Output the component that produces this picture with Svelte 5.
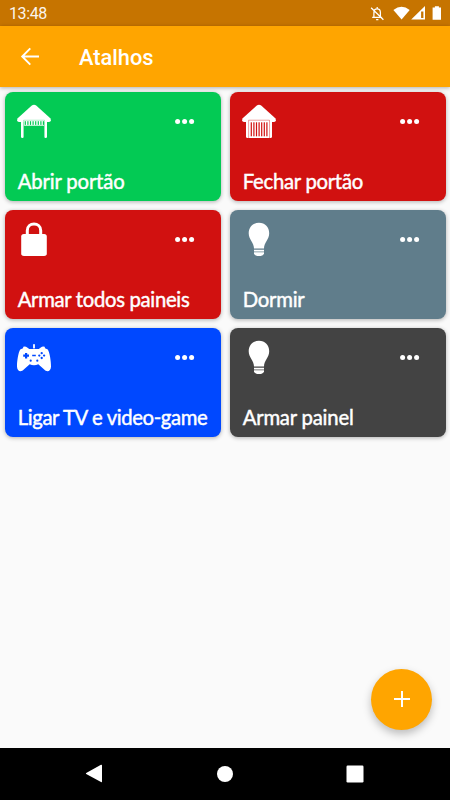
<script>
  const shortcuts = [
    { label: 'Abrir portão', icon: 'open', color: '#03ca54', width: 107 },
    { label: 'Fechar portão', icon: 'closed', color: '#d11110', width: 120.5 },
    { label: 'Armar todos paineis', icon: 'lock', color: '#d11110', width: 172 },
    { label: 'Dormir', icon: 'bulb', color: '#607d8b', width: 62 },
    { label: 'Ligar TV e video-game', icon: 'game', color: '#0048ff', width: 190 },
    { label: 'Armar painel', icon: 'bulb', color: '#434343', width: 111 }
  ];
  const slats = [7.7, 10.3, 12.9, 15.5, 18.1, 20.7, 23.3, 25.8];
</script>

<div class="screen">
  <div class="status">
    <span class="time">13:48</span>
    <svg width="80" height="18" viewBox="0 0 80 18" fill="#fff">
      <g fill="none" stroke="#fff" stroke-width="1.25">
        <path d="M3.9 13.2V8.5C3.9 3.5 10.4 3.5 10.4 8.5V13.2M2.2 13.3H12.2M7.2 4.6V3M6.1 15.5H8.4M1.1 3.7L13.4 15.7" />
      </g>
      <path d="M23.4 6Q31.6-.4 39.7 6L31.6 15.6Z" />
      <path fill-rule="evenodd" d="M55 2V15.6H41.2ZM53.4 7.6H51.1V14H53.4Z" />
      <path d="M62.6 3.5H64.9V2.2H68.9V3.5H71V15.8H62.6Z" />
    </svg>
  </div>
  <header>
    <svg class="back" width="20" height="20" viewBox="0 0 20 20" fill="none" stroke="#fff" stroke-width="1.9">
      <path d="M19 9.5H2.5M10.3 1.4L2.2 9.5L10.3 17.6" />
    </svg>
    <h1>Atalhos</h1>
  </header>
  <main>
    {#each shortcuts as s}
      <section class="card" style="background: {s.color}">
        <div class="top">
          <svg width="34" height="34" viewBox="0 0 34 34" fill="#fff">
            {#if s.icon === 'open' || s.icon === 'closed'}
              <path d="M14.8 1.5Q17-.2 19.2 1.5L33.3 14.2Q34.8 17.5 32 18H2Q-.8 17.5.7 14.2Z" />
              {#if s.icon === 'open'}
                <path d="M4 17H6.8V33Q6.8 34 5.4 34Q4 34 4 33ZM27.2 17H30V33Q30 34 28.6 34Q27.2 34 27.2 33Z" />
                <path d="M6.8 16.6H27.2V21.7H6.8Z" />
                <path d="M6.6 34V16.2H27.5V34" fill="none" stroke={s.color} stroke-width=".6" opacity=".5" />
                {#each slats as x}
                  <rect {x} y="17.2" width="1.2" height="3.7" fill={s.color} />
                {/each}
              {:else}
                <path d="M4 17H30V32.5Q30 34 28.5 34H5.5Q4 34 4 32.5Z" />
                <path d="M6.6 34V16.2H27.5V34" fill="none" stroke={s.color} stroke-width=".8" opacity=".5" />
                {#each slats.slice(0, 7) as x}
                  <rect x={x + 1} y="18.3" width="1.2" height="14" fill={s.color} />
                {/each}
              {/if}
            {:else if s.icon === 'lock'}
              <rect x="4.2" y="12" width="25.6" height="22" rx="2.6" />
              <path d="M10.3 13V8.6C10.3-.2 23.7-.2 23.7 8.6V13" fill="none" stroke="#fff" stroke-width="3" />
            {:else if s.icon === 'bulb'}
              <path d="M17 .8C10.9.8 6.7 5 6.7 11.2C6.7 17.5 12 20.5 12 26.6H22C22 20.5 27.2 17.5 27.2 11.2C27.2 5 23.1.8 17 .8Z" />
              <path d="M12 27.7H22V31.2Q21.5 34 17 34Q12.5 34 12 31.2Z" />
              <path d="M12 29.8H22" stroke={s.color} stroke-width="1.4" opacity=".5" />
            {:else}
              <rect x="16.1" y="4.2" width="1.8" height="4.2" />
              <path d="M3.2 9.5L6 8.2L6.3 6.8Q8.3 5.8 10.2 7.5L12.2 9H21.8L23.8 7.5Q25.7 5.8 27.7 6.8L28 8.2L30.8 9.5C32.8 13 34 21 34 26.5C34 31.5 29.8 32.5 27.2 29.5L21.3 24.3Q17 26.2 12.7 24.3L6.8 29.5C4.2 32.5 0 31.5 0 26.5C0 21 1.2 13 3.2 9.5Z" />
              <g fill={s.color}>
                <path d="M8 13H10.2V14.6H12V16.8H10.2V18.5H8V16.8H6.2V14.6H8ZM15.2 14.7H18.8V16.2H15.2Z" />
                <circle cx="24.7" cy="13.2" r="1.15" /><circle cx="24.7" cy="18" r="1.15" />
                <circle cx="22.3" cy="15.6" r="1.15" /><circle cx="27.1" cy="15.6" r="1.15" />
                <circle cx="13.7" cy="20.7" r="1.1" /><circle cx="20.3" cy="20.7" r="1.1" />
              </g>
            {/if}
          </svg>
          <svg class="more" width="20" height="6" viewBox="0 0 20 6" fill="#fff">
            <circle cx="2.6" cy="2.6" r="2.5" /><circle cx="9.6" cy="2.6" r="2.5" /><circle cx="16.6" cy="2.6" r="2.5" />
          </svg>
        </div>
        <svg class="label" width="200" height="32" viewBox="0 0 200 32">
          <text x="0.7" y="24" textLength={s.width}>{s.label}</text>
        </svg>
      </section>
    {/each}
  </main>
  <button class="fab" aria-label="Adicionar">
    <svg width="18" height="18" viewBox="0 0 18 18" fill="none" stroke="#fff" stroke-width="2">
      <path d="M9 1V17M1 9H17" />
    </svg>
  </button>
  <nav>
    <svg width="18" height="20" viewBox="0 0 18 20" fill="#fff"><path d="M1.2 9L16 .8Q17 .5 17 1.5V17.5Q17 18.7 16 18.1L1.2 10.1Q.5 9.5 1.2 9Z" /></svg>
    <svg width="18" height="18" viewBox="0 0 18 18" fill="#fff"><circle cx="9" cy="9" r="8" /></svg>
    <svg width="18" height="18" viewBox="0 0 18 18" fill="#fff"><rect x=".5" y=".5" width="17" height="17" rx="1.2" /></svg>
  </nav>
</div>

<style>
  :global(body) { margin: 0; }
  .screen {
    position: relative;
    display: flex;
    flex-direction: column;
    width: 450px;
    height: 800px;
    overflow: hidden;
    background: #fafafa;
    font-family: Roboto, sans-serif;
  }
  svg { display: block; flex: none; }
  .status {
    box-sizing: border-box;
    display: flex;
    justify-content: space-between;
    height: 26px;
    padding: 4px 0 0 9px;
    background: #c67400;
    color: #fff;
  }
  .time { font-size: 16px; line-height: 20px; letter-spacing: -0.4px; opacity: .93; }
  header {
    box-sizing: border-box;
    display: flex;
    align-items: center;
    gap: 39px;
    height: 61px;
    padding-left: 20px;
    background: #ffa500;
    box-shadow: 0 1px 4px rgba(0, 0, 0, .3);
    z-index: 1;
  }
  h1 {
    margin: 3px 0 0;
    color: #fff;
    font-size: 21.8px;
    font-weight: 500;
    line-height: 28px;
  }
  main {
    display: grid;
    grid-template-columns: 216px 216px;
    grid-auto-rows: 109px;
    gap: 9.2px 9px;
    flex: 1;
    align-content: start;
    padding: 5px 4.5px;
  }
  .card {
    display: flex;
    flex-direction: column;
    justify-content: space-between;
    box-sizing: border-box;
    padding: 12px 0 4px 12.5px;
    border-radius: 8px;
    box-shadow: 0 1px 4px rgba(0, 0, 0, .3);
  }
  .top { display: flex; justify-content: space-between; padding-right: 26px; }
  .more { margin-top: 14.5px; }
  .label text {
    fill: #fff;
    stroke: #fff;
    stroke-width: .45px;
    font-family: Lato, sans-serif;
    font-size: 20.3px;
  }
  .fab {
    position: absolute;
    left: 371px;
    top: 669px;
    display: grid;
    place-items: center;
    width: 61px;
    height: 61px;
    padding: 0 0 1px;
    border: 0;
    border-radius: 50%;
    background: #ffa500;
    box-shadow: 0 4px 8px rgba(0, 0, 0, .25);
  }
  nav {
    box-sizing: border-box;
    display: flex;
    align-items: center;
    justify-content: space-between;
    height: 52px;
    padding: 0 86px 0 85px;
    background: #000;
  }
</style>
